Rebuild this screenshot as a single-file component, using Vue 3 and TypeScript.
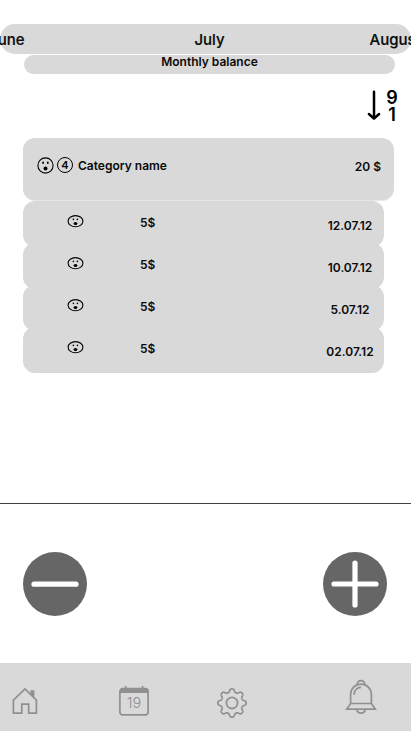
<script setup lang="ts">
interface Entry {
  amount: string
  date: string
}

const entries: Entry[] = [
  { amount: '5$', date: '12.07.12' },
  { amount: '5$', date: '10.07.12' },
  { amount: '5$', date: '5.07.12' },
  { amount: '5$', date: '02.07.12' },
]

function gearOutline(teeth: number, inner: number, outer: number): string {
  const mid = (inner + outer) / 2
  const depth = (outer - inner) / 2
  const points: string[] = []
  for (let i = 0; i < 240; i++) {
    const a = (i / 240) * Math.PI * 2
    const wave = Math.tanh(1.5 * Math.cos(teeth * a)) / Math.tanh(1.5)
    const r = mid + depth * wave
    points.push(`${(16 + r * Math.cos(a)).toFixed(2)} ${(16 + r * Math.sin(a)).toFixed(2)}`)
  }
  return `M${points.join('L')}Z`
}

const gear = gearOutline(8, 10.9, 14.1)
</script>

<template>
  <main class="screen">
    <header class="months">
      <span class="month prev">June</span>
      <span class="month current">July</span>
      <span class="month next">August</span>
    </header>
    <div class="balance">Monthly balance</div>

    <div class="sort">
      <svg class="arrow" width="14" height="31" viewBox="0 0 14 31">
        <path d="M7 1.8V28M1.9 24L7 28.6L12.1 24" />
      </svg>
      <div class="digits"><span>9</span><span>1</span></div>
    </div>

    <section class="category">
      <svg class="badge" width="17" height="17" viewBox="0 0 17 17">
        <circle class="ring" cx="8.5" cy="8.5" r="7.6" />
        <ellipse cx="6.1" cy="5.8" rx="0.9" ry="1.2" />
        <ellipse cx="10.8" cy="5.8" rx="0.9" ry="1.2" />
        <ellipse cx="8.5" cy="11.5" rx="2" ry="2.1" />
      </svg>
      <span class="count">4</span>
      <span class="name">Category name</span>
      <span class="total">20 $</span>
    </section>

    <ul class="entries">
      <li v-for="entry in entries" :key="entry.date" class="entry">
        <svg class="face" width="17" height="14" viewBox="0 0 17 14">
          <ellipse class="ring" cx="8.5" cy="7.2" rx="7.4" ry="5.6" />
          <ellipse cx="6.4" cy="5.3" rx="0.8" ry="0.9" />
          <ellipse cx="10.4" cy="5.3" rx="0.8" ry="0.9" />
          <ellipse cx="8.5" cy="9.5" rx="1.9" ry="1.6" />
        </svg>
        <span class="amount">{{ entry.amount }}</span>
        <span class="date">{{ entry.date }}</span>
      </li>
    </ul>

    <section class="actions">
      <button class="round" type="button" aria-label="Remove">
        <svg width="64" height="64" viewBox="0 0 64 64"><path d="M11 32.2H53" /></svg>
      </button>
      <button class="round" type="button" aria-label="Add">
        <svg width="64" height="64" viewBox="0 0 64 64"><path d="M11 32H53M32 11V53" /></svg>
      </button>
    </section>

    <nav class="tabs">
      <svg class="home" width="26" height="28" viewBox="0 0 26 28">
        <path class="solid" d="M18.5 3.3H22.4V11L18.5 7.3Z" />
        <path d="M1.4 13.2L13 1.9L24.4 13.2V26.2H16.7V17.2H9.8V26.2H1.4Z" />
      </svg>
      <svg class="calendar" width="30" height="30" viewBox="0 0 30 30">
        <path class="solid" d="M1 7V5Q1 2 4 2H26Q29 2 29 5V7Z" />
        <rect x="0.9" y="2.7" width="28.2" height="26.2" rx="2.8" />
        <path d="M6.7 0V4M23.6 0V4" />
        <text x="15" y="22.2" text-anchor="middle">19</text>
      </svg>
      <svg class="gear" width="32" height="32" viewBox="0 0 32 32">
        <path :d="gear" />
        <circle cx="16" cy="16" r="5.6" />
      </svg>
      <svg class="bell" width="32" height="36" viewBox="0 0 32 36">
        <path d="M12.2 5.4A3.8 3.8 0 0 1 19.8 5.4" />
        <path d="M5.6 24.5V15.5A10.4 10.4 0 0 1 26.4 15.5V24.5L30.3 30.2H1.7L5.6 24.5H26.4" />
        <path d="M9.2 15.7A6.8 6.8 0 0 1 16 8.3" />
        <path d="M11.8 30.8A4.3 4.3 0 0 0 20.2 30.8" />
      </svg>
    </nav>
  </main>
</template>

<style>
body {
  margin: 0;
  background: #fff;
}
</style>

<style scoped>
.screen {
  box-sizing: border-box;
  display: flex;
  flex-direction: column;
  width: 411px;
  height: 731px;
  padding-top: 24px;
  overflow: hidden;
  background: #fff;
  color: #0b0b0b;
  font-family: Inter, sans-serif;
  font-size: 12px;
  font-weight: 600;
  line-height: 15px;
}
.months {
  display: grid;
  grid-template-columns: 60px 1fr 60px;
  align-items: center;
  flex: none;
  height: 30px;
  border-radius: 15px;
  background: #d9d9d9;
  font-size: 15px;
  font-weight: 500;
  line-height: 18px;
}
.month {
  padding-top: 2px;
  -webkit-text-stroke: 0.2px #0b0b0b;
}
.prev {
  margin-left: -11px;
}
.current {
  padding-left: 8px;
  text-align: center;
}
.next {
  margin-left: 18.5px;
}
.balance {
  flex: none;
  height: 19px;
  margin: 1px 16px 0 24px;
  border-radius: 10px;
  background: #d9d9d9;
  line-height: 13px;
  text-align: center;
}
.sort {
  display: flex;
  flex: none;
  height: 31px;
  margin: 16px 13px 17px 367px;
  gap: 5px;
}
.arrow path {
  fill: none;
  stroke: #000;
  stroke-width: 2.5;
  stroke-linecap: round;
  stroke-linejoin: round;
}
.digits {
  display: flex;
  flex-direction: column;
  width: 12px;
  margin-top: -1px;
  font-size: 18px;
  line-height: 17px;
  text-align: center;
  color: #000;
}
.category {
  box-sizing: border-box;
  display: flex;
  flex: none;
  align-items: center;
  height: 62px;
  margin: 0 17px 1px 23px;
  padding: 0 13px 8px 13.5px;
  border-radius: 12px;
  background: #d9d9d9;
  box-shadow: 0 1px #e6e6e6;
}
.ring {
  fill: none;
  stroke: #000;
  stroke-width: 1.1;
}
.count {
  box-sizing: border-box;
  width: 16px;
  height: 16px;
  margin: 0 5px 0 3.5px;
  border: 1.1px solid #000;
  border-radius: 50%;
  font-size: 11px;
  line-height: 14px;
  text-align: center;
}
.total {
  padding-top: 2px;
  margin-left: auto;
}
.entries {
  display: flex;
  flex: none;
  flex-direction: column;
  height: 172px;
  margin: 0 27px 0 23px;
  padding: 0;
  list-style: none;
}
.entry {
  box-sizing: border-box;
  display: grid;
  grid-template-columns: 73px 1fr 68px;
  align-items: start;
  flex: none;
  height: 46px;
  margin-bottom: -4px;
  border-radius: 12px;
  background: #d9d9d9;
}
.face {
  margin: 13px 0 0 44px;
}
.amount {
  padding: 14px 0 0 44px;
}
.date {
  padding-top: 17px;
  text-align: center;
}
.actions {
  box-sizing: border-box;
  display: flex;
  flex: none;
  justify-content: space-between;
  height: 160px;
  margin-top: 130px;
  padding: 48px 24px 0 23px;
  border-top: 1px solid #404040;
}
.round {
  width: 64px;
  height: 64px;
  padding: 0;
  border: 0;
  border-radius: 50%;
  background: #666;
}
.round svg {
  display: block;
}
.round path {
  stroke: #fff;
  stroke-width: 5.2;
  stroke-linecap: round;
}
.tabs {
  display: flex;
  flex: none;
  align-items: flex-start;
  height: 68px;
  background: #d9d9d9;
}
.tabs svg {
  flex: none;
  fill: none;
  stroke: #909090;
  stroke-width: 1.7;
}
.tabs .solid {
  fill: #909090;
  stroke: none;
}
.tabs text {
  fill: #909090;
  stroke: none;
  font-size: 14.5px;
  font-weight: 300;
}
.home {
  margin: 24px 0 0 12px;
}
.calendar {
  margin: 23px 0 0 81px;
}
.gear {
  margin: 24px 0 0 67px;
}
.bell {
  margin: 16px 0 0 97px;
}
</style>
